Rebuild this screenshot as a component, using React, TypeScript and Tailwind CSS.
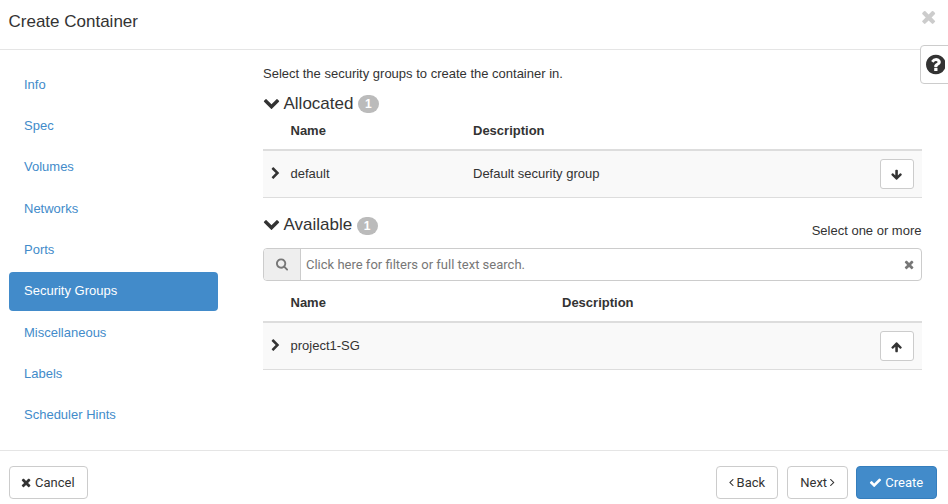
import type { ReactNode } from "react";

const icons = {
  times: {
    box: "192 0 1408 1792",
    ratio: 1408 / 1792,
    d: "M1490 1322q0 40-28 68l-136 136q-28 28-68 28t-68-28l-294-294-294 294q-28 28-68 28t-68-28l-136-136q-28-28-28-68t28-68l294-294-294-294q-28-28-28-68t28-68l136-136q28-28 68-28t68 28l294 294 294-294q28-28 68-28t68 28l136 136q28 28 28 68t-28 68l-294 294 294 294q28 28 28 68z",
  },
  chevronDown: {
    box: "0 0 1792 1792",
    ratio: 1,
    d: "M1683 808l-742 741q-19 19-45 19t-45-19l-742-741q-19-19-19-45.5t19-45.5l166-165q19-19 45-19t45 19l531 531 531-531q19-19 45-19t45 19l166 165q19 19 19 45.5t-19 45.5z",
  },
  chevronRight: {
    box: "256 0 1280 1792",
    ratio: 1280 / 1792,
    d: "M1363 877l-742 742q-19 19-45 19t-45-19l-166-166q-19-19-19-45t19-45l531-531-531-531q-19-19-19-45t19-45l166-166q19-19 45-19t45 19l742 742q19 19 19 45t-19 45z",
  },
  arrowDown: {
    box: "64 0 1664 1792",
    ratio: 1664 / 1792,
    d: "M1675 832q0 53-37 90l-651 652q-39 37-91 37-53 0-90-37l-651-652q-38-36-38-90 0-53 38-91l74-75q39-37 91-37 53 0 90 37l294 294v-704q0-52 38-90t90-38h128q52 0 90 38t38 90v704l294-294q37-37 90-37 52 0 91 37l75 75q37 39 37 91z",
  },
  arrowUp: {
    box: "64 0 1664 1792",
    ratio: 1664 / 1792,
    d: "M1675 971q0 51-37 90l-75 75q-38 38-91 38-54 0-90-38l-294-293v704q0 52-37.5 84.5t-90.5 32.5h-128q-53 0-90.5-32.5t-37.5-84.5v-704l-294 293q-36 38-90 38t-90-38l-75-75q-38-38-38-90 0-53 38-91l651-651q35-37 90-37 54 0 91 37l651 651q37 39 37 91z",
  },
  angleLeft: {
    box: "576 64 640 1792",
    ratio: 640 / 1792,
    d: "M1203 544q0 13-10 23l-393 393 393 393q10 10 10 23t-10 23l-50 50q-10 10-23 10t-23-10l-466-466q-10-10-10-23t10-23l466-466q10-10 23-10t23 10l50 50q10 10 10 23z",
  },
  angleRight: {
    box: "576 64 640 1792",
    ratio: 640 / 1792,
    d: "M1171 960q0 13-10 23l-466 466q-10 10-23 10t-23-10l-50-50q-10-10-10-23t10-23l393-393-393-393q-10-10-10-23t10-23l50-50q10-10 23-10t23 10l466 466q10 10 10 23z",
  },
  check: {
    box: "0 0 1792 1792",
    ratio: 1,
    d: "M1671 566q0 40-28 68l-724 724-136 136q-28 28-68 28t-68-28l-136-136-362-362q-28-28-28-68t28-68l136-136q28-28 68-28t68 28l294 295 656-657q28-28 68-28t68 28l136 136q28 28 28 68z",
  },
  search: {
    box: "64 64 1664 1792",
    ratio: 1664 / 1792,
    d: "M1216 832q0-185-131.5-316.5t-316.5-131.5-316.5 131.5-131.5 316.5 131.5 316.5 316.5 131.5 316.5-131.5 131.5-316.5zm512 832q0 52-38 90t-90 38q-54 0-90-38l-343-342q-179 124-399 124-143 0-273.5-55.5t-225-150-150-225-55.5-273.5 55.5-273.5 150-225 225-150 273.5-55.5 273.5 55.5 225 150 150 225 55.5 273.5q0 220-124 399l343 343q37 37 37 90z",
  },
  question: {
    box: "128 0 1536 1792",
    ratio: 1536 / 1792,
    d: "M1024 1376v-192q0-14-9-23t-23-9h-192q-14 0-23 9t-9 23v192q0 14 9 23t23 9h192q14 0 23-9t9-23zm256-672q0-88-55.5-163t-138.5-116-170-41q-243 0-371 213-15 24 8 42l132 100q7 6 19 6 16 0 25-12 53-68 86-92 34-24 86-24 48 0 85.5 26t37.5 59q0 38-20 61t-68 45q-63 28-115.5 86.5t-52.5 125.5v36q0 14 9 23t23 9h192q14 0 23-9t9-23q0-19 21.5-49.5t54.5-49.5q32-18 49-28.5t46-35 44.5-48 28-60.5 12.5-81zm384 192q0 209-103 385.5t-279.5 279.5-385.5 103-385.5-103-279.5-279.5-103-385.5 103-385.5 279.5-279.5 385.5-103 385.5 103 279.5 279.5 103 385.5z",
  },
};

function Icon({ name, size = 13, className = "" }: { name: keyof typeof icons; size?: number; className?: string }) {
  const icon = icons[name];
  return (
    <svg viewBox={icon.box} width={size * icon.ratio} height={size} fill="currentColor" className={`shrink-0 ${className}`}>
      <path d={icon.d} />
    </svg>
  );
}

const steps = ["Info", "Spec", "Volumes", "Networks", "Ports", "Security Groups", "Miscellaneous", "Labels", "Scheduler Hints"];

function SectionTitle({ children, badgeClass = "" }: { children: ReactNode; badgeClass?: string }) {
  return (
    <h4 className="flex h-5 items-center text-[17px] leading-5">
      <Icon name="chevronDown" size={17} className="-mt-[3px]" />
      <span className="ml-[3.5px]">{children}</span>
      <span
        className={`ml-[4.5px] flex h-[18px] w-[21px] items-center justify-center rounded-[10px] bg-[#bbb] text-[12px] font-bold leading-none text-white ${badgeClass}`}
      >
        1
      </span>
    </h4>
  );
}

function GroupTable({
  columns,
  name,
  description,
  arrow,
}: {
  columns: string;
  name: string;
  description?: string;
  arrow: "arrowDown" | "arrowUp";
}) {
  return (
    <div>
      <div className={`grid h-[37px] border-b-2 border-[#ddd] pt-2 font-bold leading-[18px] ${columns}`}>
        <span />
        <span>Name</span>
        <span>Description</span>
      </div>
      <div className={`grid h-[47px] items-center border-b border-[#ddd] bg-[#f9f9f9] ${columns}`}>
        <span className="pb-[2px] pl-2">
          <Icon name="chevronRight" />
        </span>
        <span>{name}</span>
        <span>{description}</span>
        <button className="flex h-[30px] w-[34px] items-center justify-center rounded-[3px] border border-[#ccc] bg-white pt-px">
          <Icon name={arrow} size={12} />
        </button>
      </div>
    </div>
  );
}

const button = "flex h-[33px] items-center justify-center rounded-[4px] border border-[#ccc] bg-white";

export default function App() {
  return (
    <div className="relative flex h-[504px] w-[948px] flex-col overflow-hidden bg-white font-['Liberation_Sans',Arial,sans-serif] text-[13px] leading-[18px] text-[#333]">
      <header className="flex h-[50px] shrink-0 justify-between border-b border-[#e5e5e5] pl-[8.5px] pr-[11.5px]">
        <h1 className="pt-[12px] text-[17px] leading-5">Create Container</h1>
        <button className="flex h-[34px] items-center text-[#ccc]">
          <Icon name="times" size={19.5} />
        </button>
      </header>

      <main className="flex h-[400px] shrink-0 pl-[9px]">
        <nav className="flex w-[209px] flex-col gap-[2px] pt-[15.4px]">
          {steps.map((step) => (
            <a
              key={step}
              className={`flex h-[39.3px] shrink-0 items-center rounded-[4px] px-[15px] pb-[0.4px] ${
                step === "Security Groups" ? "bg-[#428bca] text-white" : "text-[#428bca]"
              }`}
            >
              {step}
            </a>
          ))}
        </nav>

        <section className="ml-[45px] w-[659px] pt-[15px]">
          <p>Select the security groups to create the container in.</p>
          <div className="pt-[11px]">
            <SectionTitle>Allocated</SectionTitle>
          </div>
          <GroupTable
            columns="grid-cols-[27.5px_182.5px_407px_34px]"
            name="default"
            description="Default security group"
            arrow="arrowDown"
          />
          <div className="flex h-[50px] justify-between pt-[17px]">
            <SectionTitle badgeClass="mt-[2px]">Available</SectionTitle>
            <span className="pr-[0.5px] pt-[7px]">Select one or more</span>
          </div>
          <div className="flex h-[33px] items-center overflow-hidden rounded-[4px] border border-[#ccc] font-[Roboto,sans-serif] text-[#777]">
            <span className="flex h-full w-[37px] items-center justify-center border-r border-[#ccc] bg-[#eee]">
              <Icon name="search" />
            </span>
            <span className="flex-1 pl-[5px]">Click here for filters or full text search.</span>
            <Icon name="times" className="mr-[7px]" />
          </div>
          <div className="mt-[5px]">
            <GroupTable columns="grid-cols-[27.5px_271.5px_318px_34px]" name="project1-SG" arrow="arrowUp" />
          </div>
        </section>
      </main>

      <footer className="flex h-[54px] shrink-0 border-t border-[#e5e5e5] pl-[9px] pr-[11px] pt-[15px] font-[Roboto,sans-serif]">
        <button className={`${button} mr-auto w-[79px] gap-[3.5px] pr-px`}>
          <Icon name="times" />
          Cancel
        </button>
        <button className={`${button} w-[62px] gap-[3px]`}>
          <Icon name="angleLeft" />
          Back
        </button>
        <button className={`${button} ml-[9px] w-[61px] gap-[3px]`}>
          Next
          <Icon name="angleRight" />
        </button>
        <button className="ml-2 flex h-[33px] w-[81px] items-center justify-center gap-[3.5px] rounded-[4px] border border-[#357ebd] bg-[#428bca] pr-px text-white">
          <Icon name="check" />
          Create
        </button>
      </footer>

      <button className="absolute left-[920px] top-[45px] flex h-[39px] w-8 items-center rounded-l-[4px] border border-[#ccc] bg-white pl-[4.5px]">
        <Icon name="question" size={23} />
      </button>
    </div>
  );
}
